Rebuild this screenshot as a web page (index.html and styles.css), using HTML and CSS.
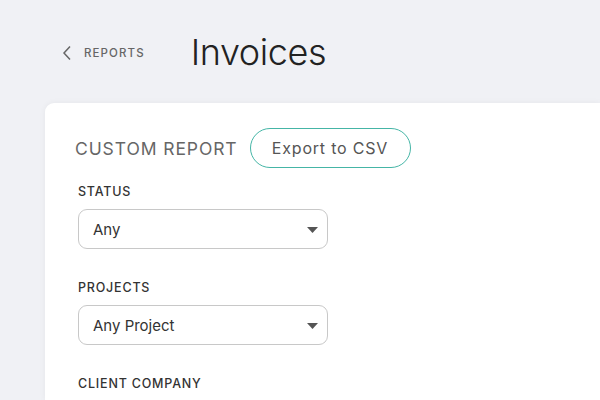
FILE: index.html
```html
<!DOCTYPE html>
<html>
<head>
<meta charset="utf-8">
<link rel="stylesheet" href="styles.css">
</head>
<body>
<header class="top">
  <a class="back" href="#">
    <svg class="chev" width="10" height="16" viewBox="0 0 10 16"><path d="M8 1.5 L2 8 L8 14.5" fill="none" stroke="#666" stroke-width="1.5"/></svg>
    <span>REPORTS</span>
  </a>
  <h1 class="title">Invoices</h1>
</header>
<main class="card">
  <div class="card-head">
    <h2 class="card-title">CUSTOM REPORT</h2>
    <button class="export">Export to CSV</button>
  </div>
  <div class="fields">
    <div class="field">
      <label class="label">STATUS</label>
      <div class="select"><span>Any</span><svg class="caret" width="11" height="6" viewBox="0 0 11 6"><path d="M0 0 H11 L5.5 6 Z" fill="#555"/></svg></div>
    </div>
    <div class="field">
      <label class="label">PROJECTS</label>
      <div class="select"><span>Any Project</span><svg class="caret" width="11" height="6" viewBox="0 0 11 6"><path d="M0 0 H11 L5.5 6 Z" fill="#555"/></svg></div>
    </div>
    <div class="field">
      <label class="label">CLIENT COMPANY</label>
    </div>
  </div>
</main>
</body>
</html>
```
FILE: styles.css
```css
html, body {
  margin: 0;
  padding: 0;
  height: 100%;
  overflow: hidden;
}
body {
  background: #f0f1f5;
  font-family: Inter, "Liberation Sans", sans-serif;
  color: #333;
  display: flex;
  flex-direction: column;
}
.top {
  display: flex;
  align-items: center;
  height: 104px;
  flex: none;
  padding-left: 62px;
  padding-top: 2px;
  box-sizing: border-box;
}
.back {
  display: flex;
  align-items: center;
  text-decoration: none;
  color: #666;
  font-size: 11.5px;
  font-weight: 500;
  letter-spacing: 1.1px;
  gap: 12px;
  margin-right: 46px;
}
.title {
  margin: 0 0 2px 0;
  font-size: 36px;
  font-weight: 300;
  color: #222;
  letter-spacing: -0.4px;
}
.card {
  flex: 1;
  margin-left: 45px;
  margin-top: -1px;
  background: #fff;
  border-radius: 9px 0 0 0;
  box-shadow: 0 0 6px rgba(0,0,0,0.05);
  padding: 25px 0 0 0;
  overflow: hidden;
}
.card-head {
  display: flex;
  align-items: center;
  padding-left: 30px;
  gap: 12px;
}
.card-title {
  margin: 0;
  font-size: 17.5px;
  font-weight: 400;
  color: #666;
  letter-spacing: 0.9px;
}
.export {
  height: 40px;
  width: 161px;
  border: 1.5px solid #45b5a6;
  border-radius: 20px;
  background: #fff;
  font-family: inherit;
  font-size: 16px;
  color: #555;
  letter-spacing: 0.8px;
  padding: 0;
}
.fields {
  padding-left: 33px;
  padding-top: 16px;
  display: flex;
  flex-direction: column;
  gap: 31px;
}
.field {
  display: flex;
  flex-direction: column;
  gap: 9px;
}
.label {
  font-size: 12.5px;
  font-weight: 500;
  line-height: 16px;
  color: #333;
  letter-spacing: 0.8px;
}
.select {
  width: 250px;
  height: 40px;
  box-sizing: border-box;
  border: 1px solid #c8c8c8;
  border-radius: 9px;
  display: flex;
  align-items: center;
  justify-content: space-between;
  padding: 0 9px 0 14px;
  font-size: 15px;
  color: #333;
}
.caret {
  margin-top: 1px;
}
```
